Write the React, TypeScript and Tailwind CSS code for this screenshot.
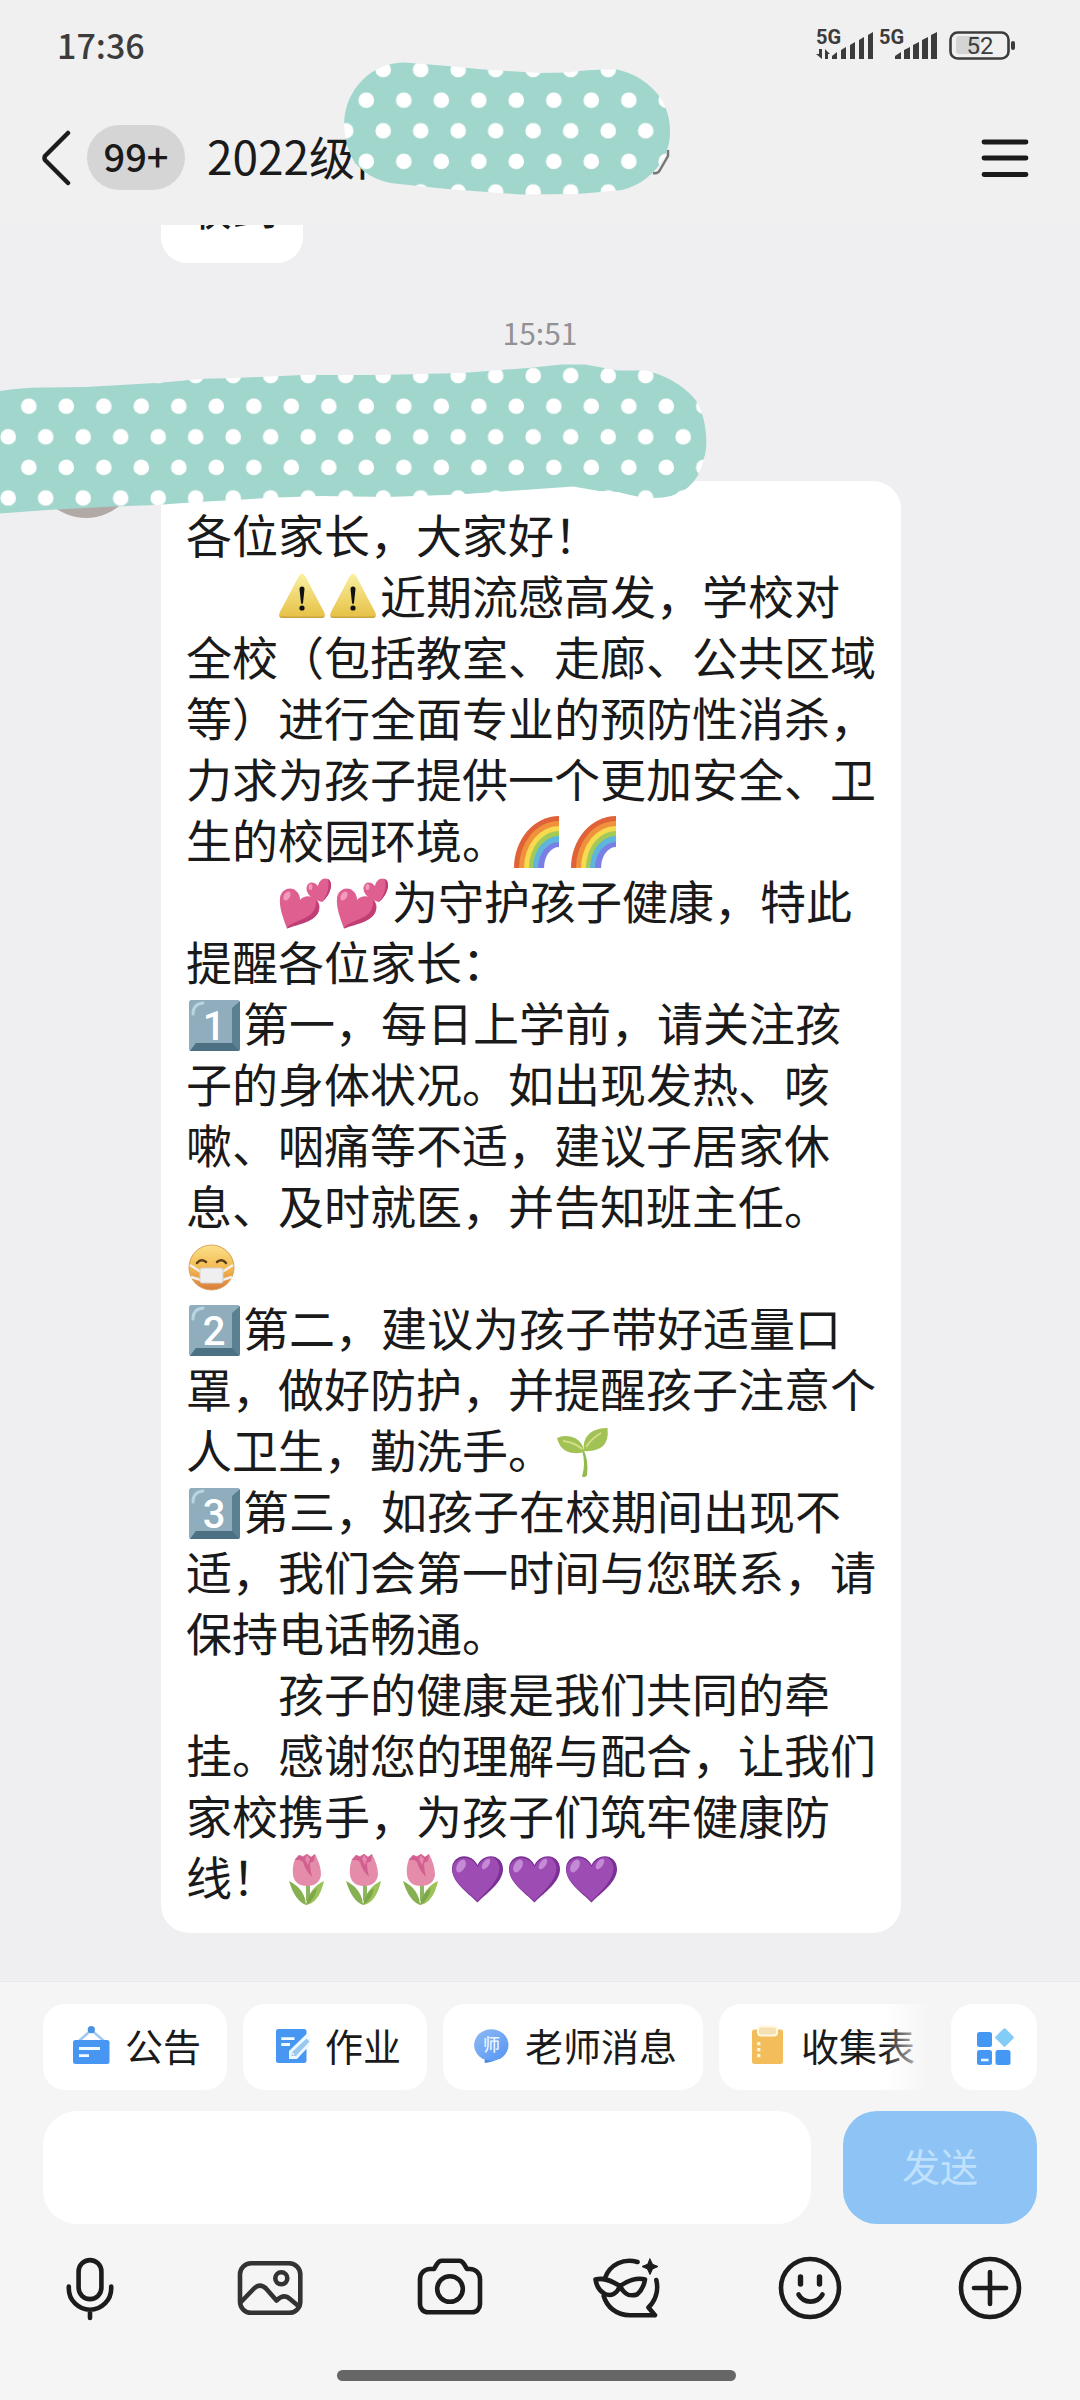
import React from 'react';

type EmojiProps = { label: string; children: React.ReactNode };

const Emoji: React.FC<EmojiProps> = ({ label, children }) => (
  <svg role="img" aria-label={label} viewBox="0 0 57 57" className="-my-1 inline-block h-[57px] w-[57px] align-[-9px]">
    {children}
  </svg>
);

const SmallEmoji: React.FC<EmojiProps> = ({ label, children }) => (
  <svg role="img" aria-label={label} viewBox="0 0 51 57" className="-my-1 inline-block h-[57px] w-[51px] align-[-9px]">
    {children}
  </svg>
);

const Warning = () => (
  <SmallEmoji label="警告">
    <defs>
      <linearGradient id="warn" x1="0" y1="0" x2="0" y2="1">
        <stop offset="0" stopColor="#fbf0a0" />
        <stop offset="1" stopColor="#e6c247" />
      </linearGradient>
    </defs>
    <path d="M24 4.500Q25.500 4.500 27 7L46 43Q48 48 44 48H4Q0 48 2 43L21 7Q22.500 4.500 24 4.500z" fill="#c9a43e" />
    <path d="M24 3.500Q25.500 3.500 27 6L46 42Q48 46.500 44 46.500H4Q0 46.500 2 42L21 6Q22.500 3.500 24 3.500z" fill="url(#warn)" />
    <path d="M21.500 19Q21.500 16.500 24 16.500T26.500 19L25 33Q24 35 23 33z" fill="#111" />
    <circle cx="24" cy="38" r="2.600" fill="#111" />
  </SmallEmoji>
);

const Rainbow = () => (
  <Emoji label="彩虹">
    <path d="M6 54A45 52 0 0 1 51 2V54z" fill="#df6238" />
    <path d="M11 54A40 47 0 0 1 51 7V54z" fill="#f0923c" />
    <path d="M16 54A35 42 0 0 1 51 12V54z" fill="#f6da50" />
    <path d="M21 54A30 37 0 0 1 51 17V54z" fill="#a3c957" />
    <path d="M25 54A26 32 0 0 1 51 22V54z" fill="#5fb6dd" />
    <path d="M30 54A21 26 0 0 1 51 28V54z" fill="#7a7fe6" />
    <path d="M36 54.500A15 21 0 0 1 51.500 33V54.500z" fill="#fff" />
  </Emoji>
);

const TwoHearts = () => (
  <Emoji label="两颗心">
    <path d="M9 53.500C5 43 1 32 2 23C3 14 13 11 18 16C21 18 22 22 22 25C26 20 34 20 39 25C45 33 40 42 30 46C22 49 15 50 9 53.500z" fill="#de5f90" />
    <path d="M9 53.500C22 49 41 46 41 33C41 30 40 27 38 25C39 38 30 42 20 46C14 49 10 50 9 53.500z" fill="#bf3f75" />
    <ellipse cx="9" cy="21" rx="3" ry="5" fill="#f29bbd" transform="rotate(30 9 21)" />
    <path d="M44 27C37 25 29 21 28.500 14C28.500 7 35 5 40 11C41 6 45 2 50 4C55 7 53 15 50 20C48 23 46 25 44 27z" fill="#de5f90" />
    <path d="M44 27C48 21 52 15 50 4C55 7 53 15 50 20C48 23 46 25 44 27z" fill="#bf3f75" />
    <ellipse cx="32.500" cy="12" rx="2" ry="3" fill="#f29bbd" />
  </Emoji>
);

const Keycap: React.FC<{ digit: string }> = ({ digit }) => (
  <Emoji label={'按键 ' + digit}>
    <rect x="3" y="3" width="51" height="51" rx="2.500" fill="#8fadbc" />
    <path d="M54 4V51.500Q54 54 51.500 54H4L10 46H46V11z" fill="#5b8092" />
    <path d="M4 54L10 46H46L53 53.500Q52.500 54 51.500 54z" fill="#4c7183" />
    <path d="M7 17Q7 7 17 6" stroke="#b7d5e0" strokeWidth="3" strokeLinecap="round" fill="none" />
    <text x="28" y="43" textAnchor="middle" fill="#fff" className="font-[Roboto,sans-serif] text-[40px] font-medium">
      {digit}
    </text>
  </Emoji>
);

const MaskFace = () => (
  <SmallEmoji label="戴口罩">
    <defs>
      <linearGradient id="face" x1="0" y1="0" x2="0" y2="1">
        <stop offset="0" stopColor="#fbe08a" />
        <stop offset="0.500" stopColor="#f3bb52" />
        <stop offset="1" stopColor="#d97a3c" />
      </linearGradient>
    </defs>
    <circle cx="25.500" cy="26.500" r="22.500" fill="url(#face)" stroke="#dba35a" />
    <path d="M11 22Q15 17 20 21M31 21Q36 17 40 22" stroke="#5e3f16" strokeWidth="2.500" fill="none" strokeLinecap="round" />
    <path d="M4 24L15 31M47 24L36 31M5 36L15 39M46 36L36 39" stroke="#f3efec" strokeWidth="2.500" />
    <rect x="14" y="27" width="23" height="15" rx="2" fill="#f0eff0" stroke="#d5cfcf" />
  </SmallEmoji>
);

const Seedling = () => (
  <Emoji label="幼苗">
    <path d="M29 24Q35 37 33 51Q32 54 28 52.500Q32 40 28 26z" fill="#93bb4c" />
    <path d="M3 14Q11 10 21 14Q29 18 30 28Q20 31 12 27Q5 23 3 14z" fill="#a2c255" />
    <path d="M53.500 4Q55 16 49 22Q42 28 30 27Q28 16 36 9Q43 4 53.500 4z" fill="#a2c255" />
    <path d="M9 17Q20 18 28 25M47 9Q38 14 32 23" stroke="#d3df86" strokeWidth="2" fill="none" />
  </Emoji>
);

const Tulip = () => (
  <Emoji label="郁金香">
    <path d="M30 34V50" stroke="#8cb760" strokeWidth="4" />
    <path d="M11 30Q27 38 28 54Q17 50 11 30z" fill="#86b052" />
    <path d="M46 30Q32 36 28 54Q41 52 46 30z" fill="#9cc25a" />
    <path d="M28 54Q30 42 39 37Q37 49 28 54z" fill="#7ea749" />
    <path d="M17 8L21 4L25 5L29 3L33 6L37 3Q43 14 43 24Q41 35 29 35Q17 35 15 24Q14 16 17 8z" fill="#e48caa" />
    <path d="M17 9L21 4L25 6L29 3L33 6L37 3L36 10L32 12Q32 19 34 26Q27 19 25 11L22 9z" fill="#d16091" />
    <path d="M27 8L29 4L32 8L30 14z" fill="#e886ac" />
  </Emoji>
);

const PurpleHeart = () => (
  <Emoji label="紫心">
    <path d="M28.500 51.500C18 41 3 31 3 18C3 4 21 0 28.500 14C36 0 54 4 54 18C54 31 39 41 28.500 51.500z" fill="#7b3095" />
    <path d="M28.500 50C17 39 3 31 3.500 18C5 6 21 2 28.500 16C36 3 48 3 50.500 16C51 29 38 40 28.500 50z" fill="#9c4cb3" />
    <ellipse cx="12" cy="15" rx="4" ry="7" fill="#c48ad6" transform="rotate(30 12 15)" />
    <ellipse cx="37" cy="13" rx="3" ry="6" fill="#c48ad6" transform="rotate(35 37 13)" />
  </Emoji>
);

const StatusBar = () => (
  <div className="flex h-[90px] items-center justify-between pr-[64px] pl-[57px]">
    <span className="text-[34px] leading-[40px] font-medium text-[#3c3c3c]">17:36</span>
    <svg viewBox="816 20 200 50" className="h-[50px] w-[200px]" fill="#3c3c3c">
      <text x="816" y="44" className="font-[Roboto,sans-serif] text-[20px] font-bold">5G</text>
      <path d="M822 49v10l-6-5h3v-5zM825 59v-10l5 5h-2v5z" />
      <path d="M832 59v-3l5-4v7zM841 59v-9l5-3v12zM850 59v-14l5-3v17zM859 59v-19l5-3v22zM868 59v-24l5-3v27z" />
      <text x="879" y="44" className="font-[Roboto,sans-serif] text-[20px] font-bold">5G</text>
      <path d="M895 59v-3l6-4v7zM904 59v-9l6-3v12zM913 59v-14l6-3v17zM922 59v-19l6-3v22zM931 59v-24l6-3v27z" />
      <rect x="956" y="36" width="24" height="18" rx="3" fill="#d4d4d4" />
      <rect x="950.500" y="32.500" width="58" height="26" rx="7" fill="none" stroke="#3c3c3c" strokeWidth="2.600" />
      <rect x="1011" y="41" width="4" height="9" rx="2" />
      <text x="980" y="54" textAnchor="middle" className="font-[Roboto,sans-serif] text-[24px]">52</text>
    </svg>
  </div>
);

const TitleBar = () => (
  <div className="flex h-[135px] items-center pr-[50px] pl-[40px]">
    <button type="button" aria-label="返回" className="flex items-center gap-[15px]">
      <svg viewBox="0 0 32 56" className="h-[56px] w-[32px]" fill="none" stroke="#1c1c1c" strokeWidth="4.500" strokeLinecap="round" strokeLinejoin="round">
        <path d="M28 3L5 26Q4 28 5 30L28 53" />
      </svg>
      <span className="flex h-[65px] w-[98px] items-center justify-center rounded-full bg-[#d5d5d6] pb-[3px] text-[38px] leading-[40px] font-medium">
        99+
      </span>
    </button>
    <h1 className="ml-[22px] flex-1 pb-[5px] text-[46px] leading-[60px]">2022级阝</h1>
    <button type="button" aria-label="菜单">
      <svg viewBox="0 0 50 44" className="h-[44px] w-[50px]" stroke="#1a1a1a" strokeWidth="4.800" strokeLinecap="round">
        <path d="M4 6H46M4 22H46M4 38.500H46" />
      </svg>
    </button>
  </div>
);

const DottedTape = () => (
  <svg aria-hidden="true" viewBox="0 0 1080 540" className="pointer-events-none absolute top-0 left-0 h-[540px] w-[1080px]">
    <defs>
      <pattern id="dots" x="0" y="85" width="37.500" height="61.200" patternUnits="userSpaceOnUse">
        <rect width="37.500" height="61.200" fill="#a1d6cd" />
        <circle cx="28.800" cy="15.200" r="7.800" fill="#fff" />
        <circle cx="8.200" cy="45.800" r="7.800" fill="#fff" />
      </pattern>
    </defs>
    <path d="M668 150V156L660 170Q658 174 653 173" fill="none" stroke="#777" strokeWidth="2.500" />
    <path
      d="M344 124C345 88 373 62 405 62.500L447 66L489 70L540 73L567 72.500Q590 69 617 69.500Q643 75 660 97C673 117 672 140 665 156Q650 183 622 190L578 194L520 194.500L447 189L399 184Q372 182 355 163Q345 148 344 124z"
      fill="url(#dots)"
    />
    <path
      d="M0 391Q24 387 47 387.500L85 387L160 382.700L203 378.700L236 378L302 375L378 375L462 373L528 368L562 364.500H585L618 370.500H646Q676 378 694 398C706 412 709 445 704 458Q696 498 653 498Q640 498 618 492L599 491L573 486.500L524 490L458 494.500L387 497L321 496L278 497.500L198 502L156 505L113 506.500L47 510L0 513.500z"
      fill="url(#dots)"
    />
  </svg>
);

const Message = () => (
  <div className="mt-[62px] flex gap-[23px] pl-[34px]">
    <div className="h-[104px] w-[104px] shrink-0 rounded-full bg-[#b1a9a6]" />
    <div className="mt-[67px] w-[740px] rounded-[28px] rounded-tl-none bg-white px-[25px] pt-[22px] pb-[27px] text-[46px] leading-[61px]">
      <p>各位家长，大家好！</p>
      <p className="indent-[92px]">
        <Warning /><Warning />近期流感高发，学校对全校（包括教室、走廊、公共区域等）进行全面专业的预防性消杀，力求为孩子提供一个更加安全、卫生的校园环境。<Rainbow /><Rainbow />
      </p>
      <p className="indent-[92px]">
        <TwoHearts /><TwoHearts />为守护孩子健康，特此提醒各位家长：
      </p>
      <p><Keycap digit="1" />第一，每日上学前，请关注孩子的身体状况。如出现发热、咳嗽、咽痛等不适，建议子居家休息、及时就医，并告知班主任。<MaskFace /></p>
      <p><Keycap digit="2" />第二，建议为孩子带好适量口罩，做好防护，并提醒孩子注意个人卫生，勤洗手。<Seedling /></p>
      <p><Keycap digit="3" />第三，如孩子在校期间出现不适，我们会第一时间与您联系，请保持电话畅通。</p>
      <p className="indent-[92px]">
        孩子的健康是我们共同的牵挂。感谢您的理解与配合，让我们家校携手，为孩子们筑牢健康防线！<Tulip /><Tulip /><Tulip /><PurpleHeart /><PurpleHeart /><PurpleHeart />
      </p>
    </div>
  </div>
);

const NoticeIcon = () => (
  <svg viewBox="0 0 48 48" className="h-12 w-12">
    <path d="M12 18L24.300 7L37 18" fill="none" stroke="#a0c9f3" strokeWidth="2.600" />
    <circle cx="24.300" cy="6.700" r="3.600" fill="#4a92e2" />
    <rect x="6" y="17" width="36.500" height="24" rx="2.500" fill="#4797f2" />
    <path d="M12 25.500H33M12 32.700H22" stroke="#f2fbff" strokeWidth="2.800" />
  </svg>
);

const HomeworkIcon = () => (
  <svg viewBox="0 0 48 48" className="h-12 w-12">
    <rect x="9" y="6" width="30.500" height="34" rx="2.500" fill="#4797f2" />
    <path d="M14.300 15.700H27.500M14.300 21.500H23" stroke="#f2fbff" strokeWidth="2.800" />
    <path d="M39.500 11L22 28V36H30L43 22V10z" fill="#eefaff" />
    <path d="M39.500 15.500L42.500 18.500L29 33H24.500V29.500z" fill="#9cc8f0" />
    <path d="M24.500 29.500L27 32" stroke="#eefaff" strokeWidth="1.500" />
  </svg>
);

const TeacherIcon = () => (
  <svg viewBox="0 0 48 48" className="h-12 w-12">
    <defs>
      <linearGradient id="teacher" x1="0" y1="0" x2="1" y2="1">
        <stop offset="0" stopColor="#8fbaf4" />
        <stop offset="1" stopColor="#5595f4" />
      </linearGradient>
    </defs>
    <path d="M17.500 34L17.800 40Q27 39 32 35z" fill="#4a86dc" />
    <ellipse cx="24.300" cy="22" rx="17.200" ry="15.800" fill="url(#teacher)" />
    <text x="24.500" y="28" textAnchor="middle" fill="#e8f4ff" className="text-[17px] font-medium">师</text>
  </svg>
);

const FormIcon = () => (
  <svg viewBox="0 0 48 48" className="h-12 w-12">
    <rect x="9" y="6.500" width="31" height="34.500" rx="2.500" fill="#f3bd5c" />
    <rect x="15" y="3.500" width="19" height="9" rx="3" fill="#f6dfb0" stroke="#fff8e0" strokeWidth="2" />
    <path d="M14.200 19H17.400V22.200H14.200zM14.200 25H17.400V28.200H14.200zM14.200 31H17.400V34.200H14.200z" fill="#fff6dc" />
  </svg>
);

const AppsIcon = () => (
  <svg viewBox="0 0 48 48" className="h-12 w-12" fill="#4498f4">
    <rect x="7" y="9" width="15" height="15" rx="2.500" />
    <rect x="7" y="27" width="15" height="15" rx="2.500" />
    <rect x="25.500" y="27" width="15" height="15" rx="2.500" />
    <rect x="27.500" y="7.500" width="14" height="14" rx="1.500" fill="#82ccf8" transform="rotate(45 34.500 14.500)" />
    <path d="M11 37H18.500" stroke="#e8f8ff" strokeWidth="2.600" />
  </svg>
);

const shortcuts = [
  { name: '公告', icon: <NoticeIcon /> },
  { name: '作业', icon: <HomeworkIcon /> },
  { name: '老师消息', icon: <TeacherIcon /> },
  { name: '收集表', icon: <FormIcon /> },
];

const tools = [
  {
    name: '语音',
    icon: (
      <>
        <rect x="24.600" y="8.100" width="22.800" height="39" rx="11.400" />
        <path d="M14.800 34.500V36.500A21.200 21.200 0 0 0 57.200 36.500V34.500M36 58V66" />
      </>
    ),
  },
  {
    name: '图片',
    icon: (
      <g stroke="#333">
        <rect x="6" y="11.300" width="60.300" height="49.500" rx="11" />
        <circle cx="47.300" cy="26.300" r="6" />
        <path d="M7 50L20 36.500Q26 30.500 32 36.500L42.500 48.500Q50 41 56 47L65 54.500" />
      </g>
    ),
  },
  {
    name: '拍照',
    icon: (
      <>
        <path d="M6 27A10 10 0 0 1 16 17H20L23 12Q25 8.700 28 8.700H45Q48 8.700 50 12L53 17H56A10 10 0 0 1 66 27V52A8 8 0 0 1 58 60.300H14A8 8 0 0 1 6 52z" />
        <circle cx="36" cy="37" r="12.800" />
      </>
    ),
  },
  {
    name: '匿名',
    icon: (
      <>
        <path d="M43.500 10C30 6 16 12 11 26M62.300 28C65 39 61 49 54.500 55.500L61 63.300H36C22 63 13 55 9.700 44" />
        <path d="M1.500 27.500C10 25 18 29 26 34C23 42 17 44.500 11 42C5 39 2.500 34 1.500 27.500zM26 34C33 29 43 25 51 27.500C50 34 47 39 43 42.500C35 45 30 42 26 34z" />
        <path d="M56 7L58.500 12.300L64 14.500L58.500 17L56 22.500L53.500 17L48 14.500L53.500 12.300z" fill="#1c1c1c" strokeWidth="1" />
      </>
    ),
  },
  {
    name: '表情',
    icon: (
      <>
        <circle cx="36" cy="36" r="29" />
        <path d="M26.500 25V32M45.500 25V32" strokeWidth="5.400" />
        <path d="M24.500 42.500C30 52 43 52 48.500 42.500" />
      </>
    ),
  },
  {
    name: '更多',
    icon: (
      <>
        <circle cx="36" cy="36" r="29" />
        <path d="M36 20V52M20 36H52" />
      </>
    ),
  },
];

const Composer = () => (
  <footer className="border-t border-[#e8e8e9] bg-[#f5f5f5]">
    <div className="flex gap-[21px] px-[43px] pt-[22px]">
      <div className="relative min-w-0 flex-1 overflow-hidden">
        <div className="flex gap-4">
          {shortcuts.map((item) => (
            <button key={item.name} type="button" className="flex h-[86px] shrink-0 items-center gap-[10px] rounded-[22px] bg-white pr-[26px] pl-[24px]">
              {item.icon}
              <span className="pb-[5px] text-[38px] leading-[50px]">{item.name}</span>
            </button>
          ))}
        </div>
        <div className="pointer-events-none absolute inset-y-0 right-0 w-[46px] bg-gradient-to-r from-transparent to-[#f5f5f5]" />
      </div>
      <button type="button" aria-label="全部应用" className="flex h-[86px] w-[86px] items-center justify-center rounded-[22px] bg-white">
        <AppsIcon />
      </button>
    </div>
    <form className="mt-[21px] flex gap-8 px-[43px]" onSubmit={(e) => e.preventDefault()}>
      <input type="text" aria-label="消息" className="h-[113px] min-w-0 flex-1 rounded-[34px] bg-white px-8 text-[46px] outline-none" />
      <button type="submit" className="h-[113px] w-[194px] rounded-[34px] bg-[#8ec3f5] pb-[5px] text-[38px] leading-[50px] text-[#bfe1fd]">
        发送
      </button>
    </form>
    <div className="grid h-32 grid-cols-6 items-center justify-items-center">
      {tools.map((tool) => (
        <button key={tool.name} type="button" aria-label={tool.name}>
          <svg viewBox="0 0 72 72" className="h-[72px] w-[72px]" fill="none" stroke="#1c1c1c" strokeWidth="4.600" strokeLinecap="round" strokeLinejoin="round" overflow="visible">
            {tool.icon}
          </svg>
        </button>
      ))}
    </div>
    <div className="flex h-12 justify-center pt-[18px] pr-2">
      <div className="h-[11px] w-[399px] rounded-full bg-[#666]" />
    </div>
  </footer>
);

const App: React.FC = () => {
  return (
    <div className="relative flex min-h-screen flex-col bg-[#efeff2] font-['Noto_Sans_CJK_SC',sans-serif] text-[#1a1a1a]" lang="zh-CN">
      <header className="bg-[#f0f0f0]">
        <StatusBar />
        <TitleBar />
      </header>

      <main className="flex-1">
        {/* Tail of the previous message, scrolled under the header */}
        <div className="flex h-[38px] items-end overflow-hidden pl-[161px]">
          <p className="rounded-[26px] bg-white px-[25px] pt-[22px] pb-[27px] text-[46px] leading-[61px]">收到</p>
        </div>
        <p className="mt-[49px] text-center text-[30px] leading-[40px] text-[#929294]">15:51</p>
        <Message />
      </main>

      <Composer />
      <DottedTape />
    </div>
  );
};

export default App;
